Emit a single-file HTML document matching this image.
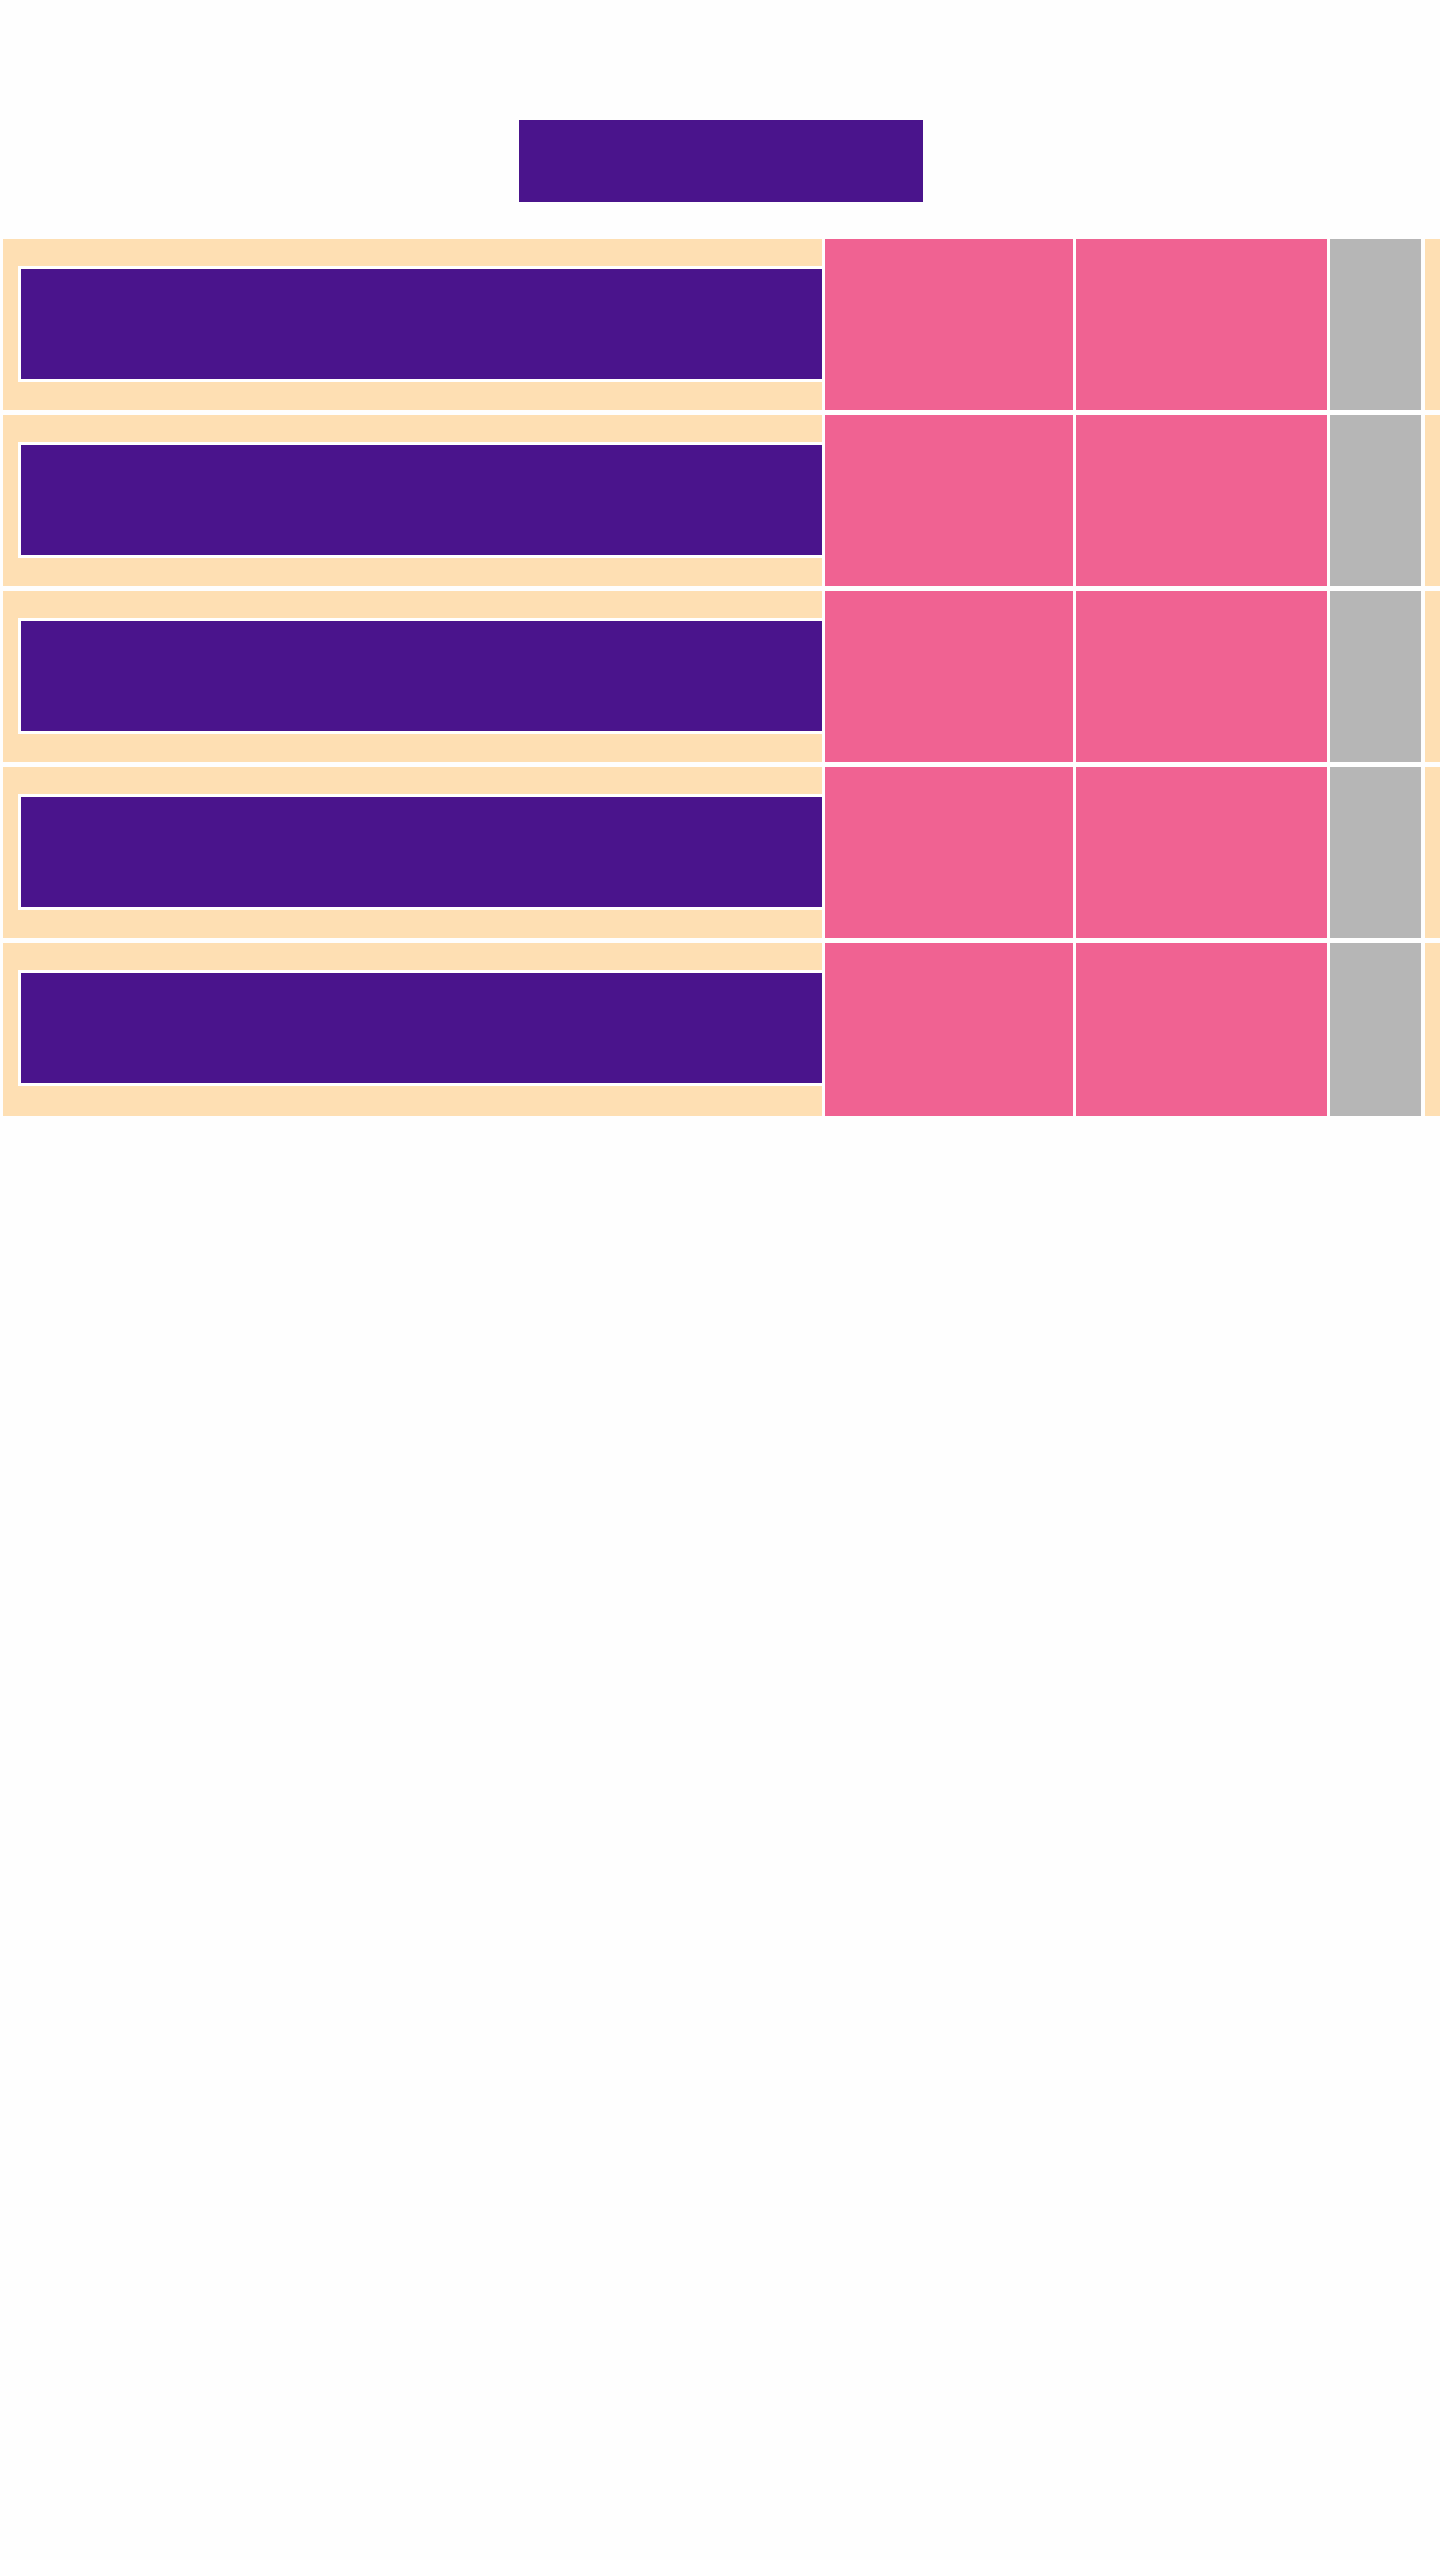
<!DOCTYPE html>
<html><head><meta charset="utf-8"><style>
html,body{margin:0;padding:0;background:#fefefe;width:1440px;height:2560px;overflow:hidden;position:relative}
div{position:absolute}
.h{left:519px;top:120px;width:404px;height:82px;background:#4a148c}
.c{background:#fedfb3}
.p{background:#f06292}
.g{background:#b6b6b6}
.in{left:18px;top:27px;width:801px;height:110px;background:#4a148c;border:3px solid #fff;border-right:none}
</style></head><body>
<div class="h"></div>
<div style="top:239px;left:0;width:1440px;height:171px">
<div class="c" style="left:3px;top:0;width:819px;height:171px"><div class="in" style="left:15px"></div></div>
<div class="p" style="left:825px;top:0;width:248px;height:171px"></div>
<div class="p" style="left:1076px;top:0;width:251px;height:171px"></div>
<div class="g" style="left:1330px;top:0;width:91px;height:171px"></div>
<div class="c" style="left:1425px;top:0;width:15px;height:171px"></div>
</div>
<div style="top:415px;left:0;width:1440px;height:171px">
<div class="c" style="left:3px;top:0;width:819px;height:171px"><div class="in" style="left:15px"></div></div>
<div class="p" style="left:825px;top:0;width:248px;height:171px"></div>
<div class="p" style="left:1076px;top:0;width:251px;height:171px"></div>
<div class="g" style="left:1330px;top:0;width:91px;height:171px"></div>
<div class="c" style="left:1425px;top:0;width:15px;height:171px"></div>
</div>
<div style="top:591px;left:0;width:1440px;height:171px">
<div class="c" style="left:3px;top:0;width:819px;height:171px"><div class="in" style="left:15px"></div></div>
<div class="p" style="left:825px;top:0;width:248px;height:171px"></div>
<div class="p" style="left:1076px;top:0;width:251px;height:171px"></div>
<div class="g" style="left:1330px;top:0;width:91px;height:171px"></div>
<div class="c" style="left:1425px;top:0;width:15px;height:171px"></div>
</div>
<div style="top:767px;left:0;width:1440px;height:171px">
<div class="c" style="left:3px;top:0;width:819px;height:171px"><div class="in" style="left:15px"></div></div>
<div class="p" style="left:825px;top:0;width:248px;height:171px"></div>
<div class="p" style="left:1076px;top:0;width:251px;height:171px"></div>
<div class="g" style="left:1330px;top:0;width:91px;height:171px"></div>
<div class="c" style="left:1425px;top:0;width:15px;height:171px"></div>
</div>
<div style="top:943px;left:0;width:1440px;height:173px">
<div class="c" style="left:3px;top:0;width:819px;height:173px"><div class="in" style="left:15px"></div></div>
<div class="p" style="left:825px;top:0;width:248px;height:173px"></div>
<div class="p" style="left:1076px;top:0;width:251px;height:173px"></div>
<div class="g" style="left:1330px;top:0;width:91px;height:173px"></div>
<div class="c" style="left:1425px;top:0;width:15px;height:173px"></div>
</div>
</body></html>
